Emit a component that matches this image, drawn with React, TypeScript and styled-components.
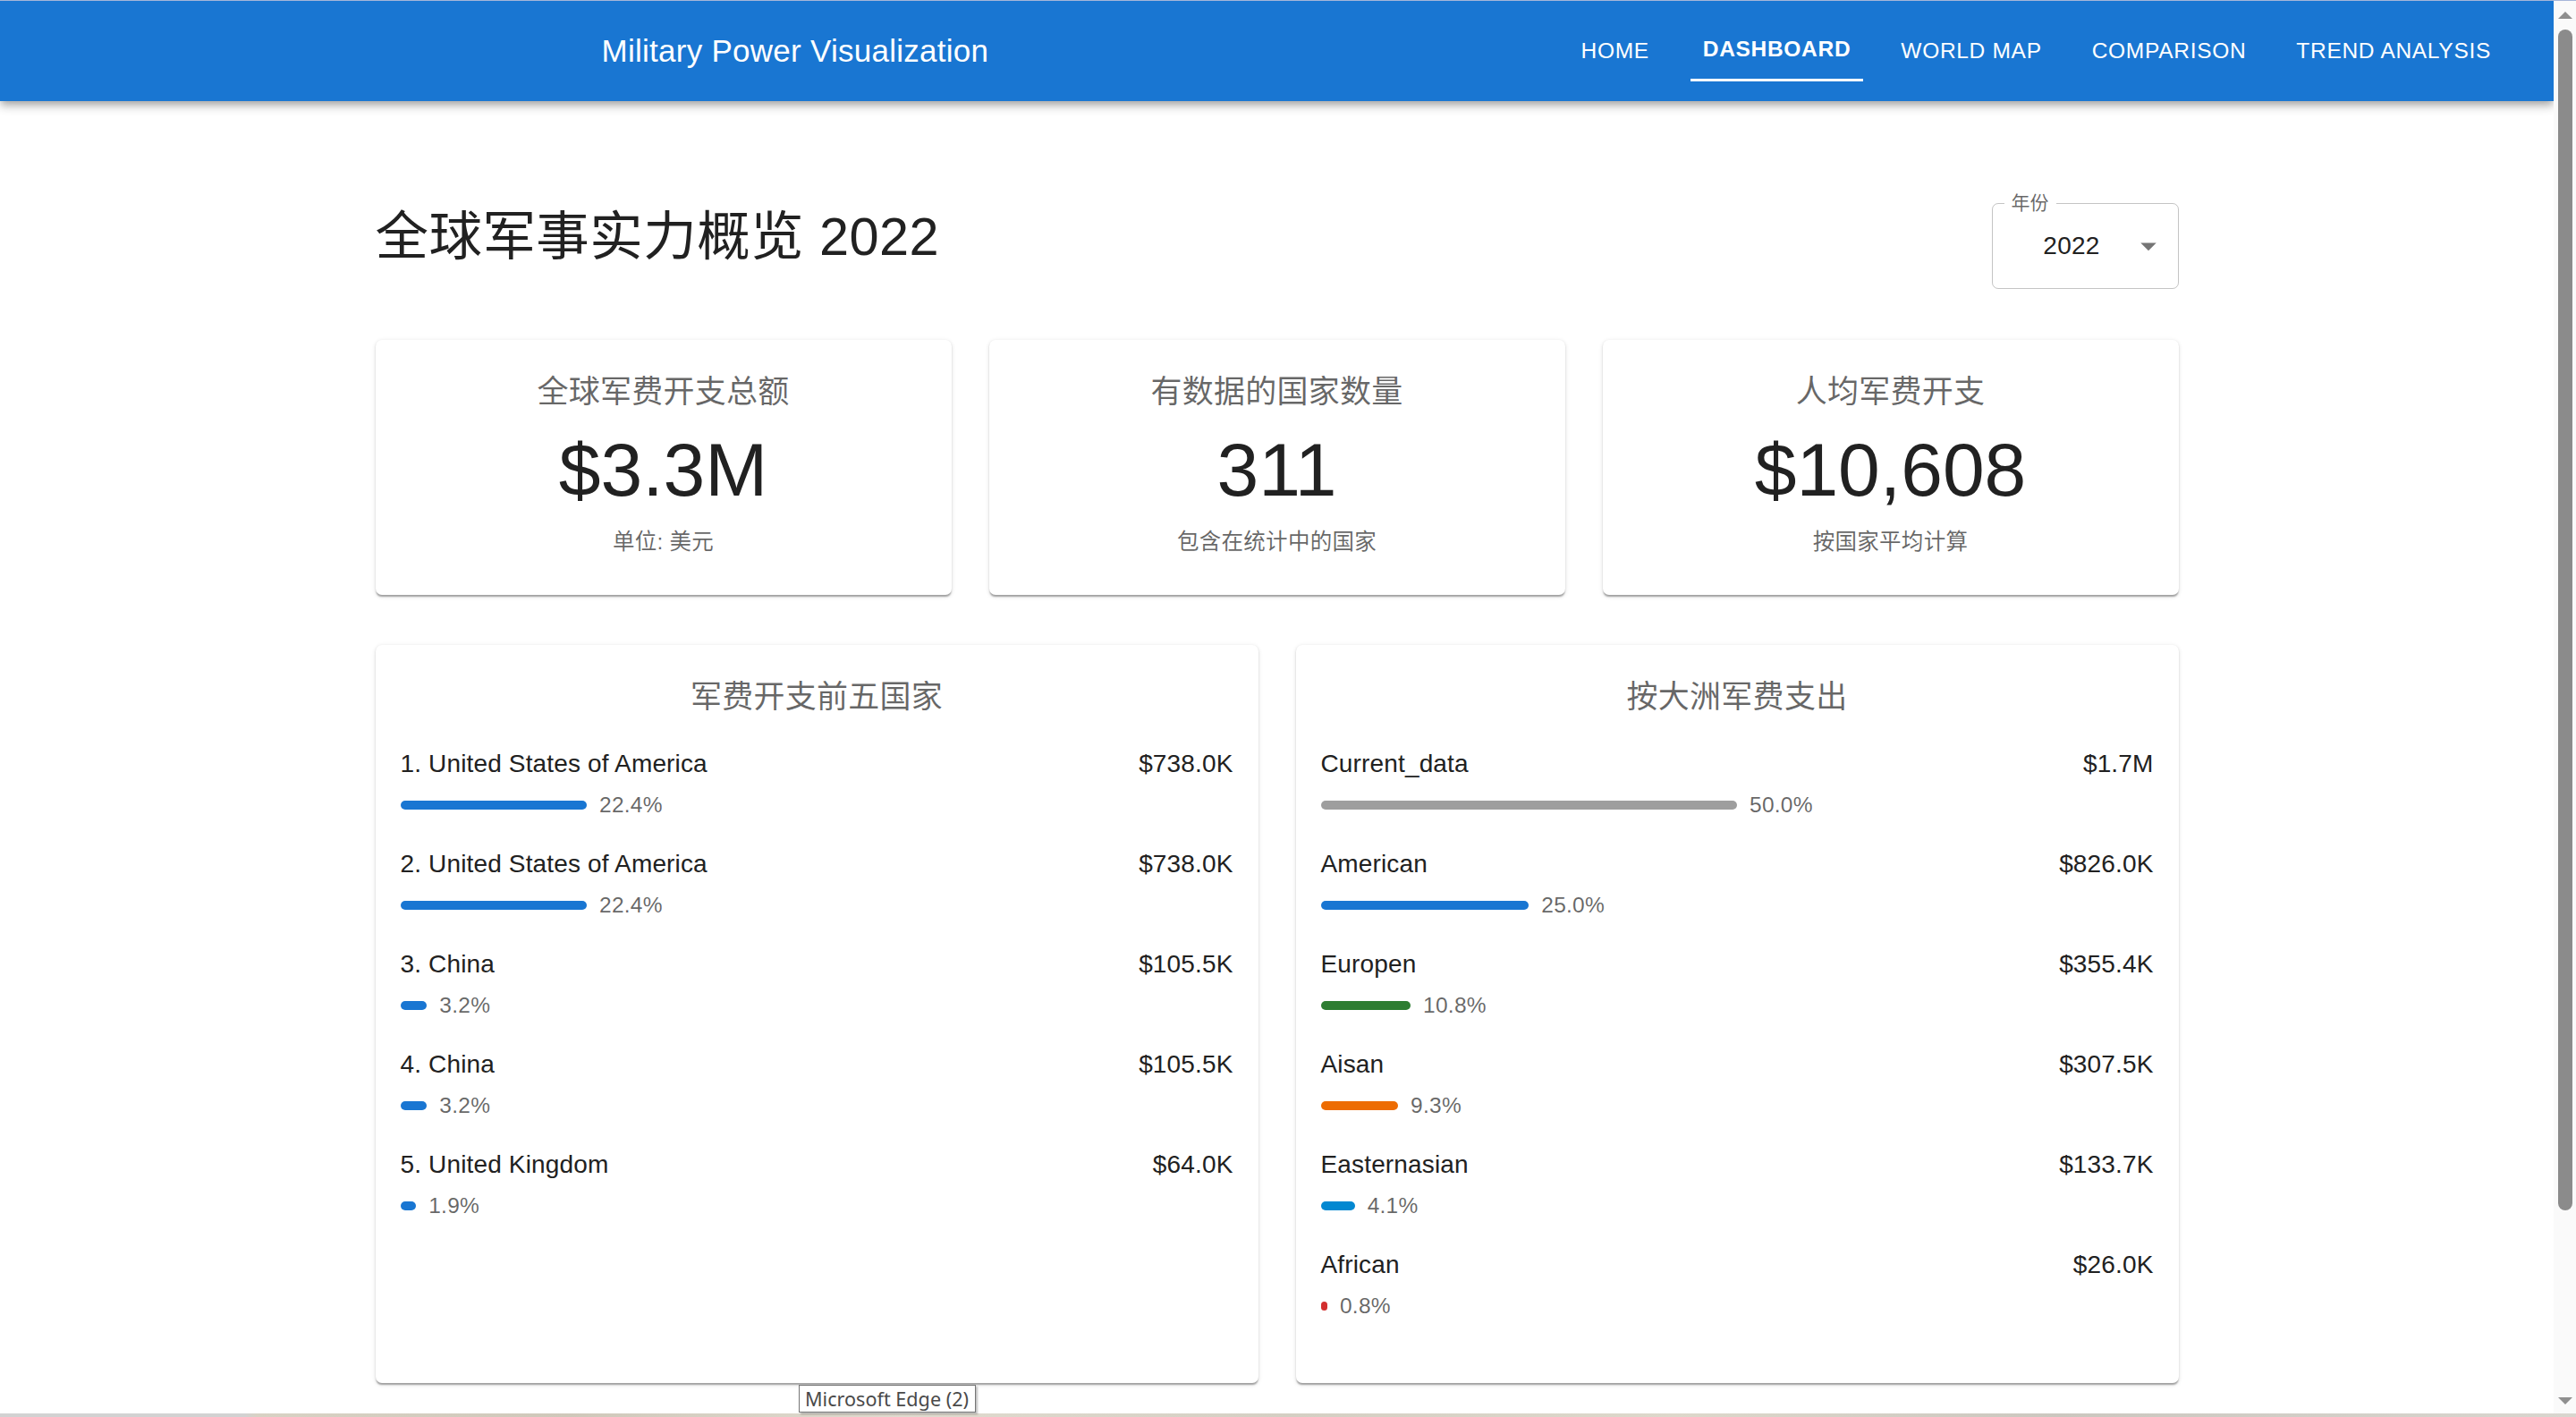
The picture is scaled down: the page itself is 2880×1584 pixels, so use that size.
import React from 'react';
import styled, { createGlobalStyle } from 'styled-components';

const FONT = `"Liberation Sans", Arial, "Noto Sans CJK SC", sans-serif`;

const GlobalStyle = createGlobalStyle`
  html, body { margin: 0; padding: 0; background: #fff; overflow: hidden; }
  #root { width: 2880px; height: 1584px; }
  *, *::before, *::after { box-sizing: border-box; }
`;

const Screen = styled.div`
  position: relative;
  width: 2880px;
  height: 1584px;
  display: flex;
  flex-direction: column;
  overflow: hidden;
  font-family: ${FONT};
  background: #fff;
`;

const WindowEdge = styled.div`
  height: 1px;
  flex-shrink: 0;
  background: #a6b6d9;
`;

const Viewport = styled.div`
  flex: 1;
  min-height: 0;
  display: flex;
`;

const Page = styled.div`
  flex: 1;
  min-width: 0;
  display: flex;
  flex-direction: column;
  overflow: hidden;
  background: #fff;
`;

const AppBar = styled.header`
  position: relative;
  z-index: 2;
  height: 112px;
  flex-shrink: 0;
  display: flex;
  align-items: stretch;
  padding: 0 56px 0 42px;
  background: #1976d2;
  color: #fff;
  box-shadow: 0 3.5px 7px -1.75px rgba(0, 0, 0, 0.2), 0 7px 8.75px 0 rgba(0, 0, 0, 0.14),
    0 1.75px 17.5px 0 rgba(0, 0, 0, 0.12);
`;

const Brand = styled.h1`
  flex: 1;
  align-self: center;
  margin: 0 14px 0 0;
  text-align: center;
  font-size: 35px;
  font-weight: 400;
  line-height: 56px;
  letter-spacing: 0.26px;
  color: #fff;
`;

const Nav = styled.nav`
  display: flex;
  align-items: stretch;
  gap: 28px;
`;

const NavButton = styled.a<{ $active?: boolean }>`
  position: relative;
  display: flex;
  align-items: center;
  justify-content: center;
  min-width: 112px;
  padding: 0 14px ${(p) => (p.$active ? 5 : 0)}px;
  font-size: 24.5px;
  font-weight: ${(p) => (p.$active ? 700 : 400)};
  letter-spacing: 0.7px;
  text-transform: uppercase;
  color: #fff;
  text-decoration: none;
  white-space: nowrap;
  cursor: pointer;
`;

const NavIndicator = styled.span`
  position: absolute;
  left: 0;
  right: 0;
  bottom: 22px;
  height: 3px;
  background: #fff;
`;

const Main = styled.main`
  flex: 1;
  padding-top: 102px;
`;

const Container = styled.div`
  width: 100%;
  max-width: 2100px;
  margin: 0 auto;
  padding: 0 42px;
`;

const HeadingRow = styled.div`
  display: flex;
  justify-content: space-between;
  align-items: flex-start;
  margin-bottom: 57px;
`;

const PageTitle = styled.h2`
  margin: 13px 0 0;
  font-size: 59.5px;
  line-height: 73.5px;
  font-weight: 400;
  letter-spacing: 0.44px;
  color: #212121;
`;

const SelectBox = styled.fieldset`
  margin: 0;
  padding: 0;
  width: 209px;
  min-width: 0;
  border: 1px solid rgba(0, 0, 0, 0.23);
  border-radius: 7px;
`;

const SelectLabel = styled.legend`
  margin-left: 13px;
  padding: 0 8px;
  font-size: 21px;
  line-height: 24px;
  color: rgba(0, 0, 0, 0.6);
`;

const SelectValueRow = styled.div`
  height: 83px;
  display: flex;
  align-items: center;
  padding-bottom: 12px;
`;

const SelectValue = styled.span`
  flex: 1;
  padding-left: 24px;
  text-align: center;
  font-size: 28px;
  line-height: 1;
  color: #212121;
  letter-spacing: 0.26px;
`;

const DropIcon = styled.svg`
  width: 42px;
  height: 42px;
  margin-right: 12px;
  flex-shrink: 0;
  fill: rgba(0, 0, 0, 0.54);
`;

const StatsGrid = styled.div`
  display: grid;
  grid-template-columns: repeat(3, 1fr);
  gap: 42px;
  margin-bottom: 56px;
`;

const PanelsGrid = styled.div`
  display: grid;
  grid-template-columns: repeat(2, 1fr);
  gap: 42px;
`;

const Card = styled.section`
  background: #fff;
  border-radius: 7px;
  box-shadow: 0 3.5px 1.75px -1.75px rgba(0, 0, 0, 0.2), 0 1.75px 1.75px 0 rgba(0, 0, 0, 0.14),
    0 1.75px 5.25px 0 rgba(0, 0, 0, 0.12);
  padding: 28px 28px 42px;
`;

const StatCard = styled(Card)`
  text-align: center;
`;

const CardTitle = styled.h3<{ $gap: number }>`
  margin: 0 0 ${(p) => p.$gap}px;
  padding-top: 2px;
  font-size: 35px;
  line-height: 56px;
  font-weight: 400;
  letter-spacing: 0.26px;
  color: rgba(0, 0, 0, 0.6);
  text-align: center;
`;

const StatValue = styled.div`
  font-size: 84px;
  line-height: 98px;
  font-weight: 400;
  color: #212121;
`;

const StatNote = styled.p`
  margin: 14px 0 0;
  font-size: 24.5px;
  line-height: 35px;
  letter-spacing: 0.26px;
  color: rgba(0, 0, 0, 0.6);
`;

const ItemList = styled.ul`
  list-style: none;
  margin: 0;
  padding: 0;
`;

const Item = styled.li`
  margin-bottom: 27px;
`;

const ItemHead = styled.div`
  display: flex;
  justify-content: space-between;
  padding-top: 1px;
  font-size: 28px;
  line-height: 42px;
  letter-spacing: 0.15px;
  color: #212121;
`;

const BarRow = styled.div`
  display: flex;
  align-items: center;
  height: 35px;
  margin-top: 7px;
`;

const Bar = styled.div<{ $color: string }>`
  flex-shrink: 0;
  height: 10px;
  border-radius: 5px;
  background: ${(p) => p.$color};
`;

const Percent = styled.span`
  margin-left: 14px;
  font-size: 24.5px;
  line-height: 35px;
  letter-spacing: 0.26px;
  color: rgba(0, 0, 0, 0.6);
`;

const ScrollTrack = styled.div`
  width: 25px;
  flex-shrink: 0;
  display: flex;
  flex-direction: column;
  align-items: center;
  padding: 12px 0 10px;
  background: #fafafa;
`;

const ScrollArrow = styled.svg`
  display: block;
  width: 16px;
  height: 8px;
  flex-shrink: 0;
  fill: #8f8f8f;
`;

const ScrollThumb = styled.div`
  width: 16px;
  height: 1320px;
  margin-top: 12px;
  border-radius: 8px;
  background: #8b8b8b;
`;

const ScrollSpacer = styled.div`
  flex: 1;
`;

const Taskbar = styled.div`
  height: 4px;
  flex-shrink: 0;
  background: linear-gradient(
    90deg,
    #d2d2d2 0,
    #d2d2d2 9.5%,
    #d8d2c4 10%,
    #cfc8ba 22%,
    #e0dbcf 35%,
    #d4cfc3 50%,
    #ddd8cb 65%,
    #cbc7bf 80%,
    #d9d6cf 100%
  );
`;

const Tooltip = styled.div`
  position: absolute;
  left: 893px;
  top: 1548px;
  height: 31px;
  padding: 0 7px 0 6px;
  border: 1px solid #767676;
  background: #fff;
  box-shadow: 2px 2px 2px rgba(0, 0, 0, 0.25);
  font-family: "Noto Sans", "Open Sans", sans-serif;
  font-size: 21.6px;
  line-height: 29px;
  color: #4a4a4a;
  white-space: nowrap;
`;

type Entry = { name: string; value: string; pct: number; color: string };

const BLUE = '#1976d2';

const topCountries: Entry[] = [
  { name: '1. United States of America', value: '$738.0K', pct: 22.4, color: BLUE },
  { name: '2. United States of America', value: '$738.0K', pct: 22.4, color: BLUE },
  { name: '3. China', value: '$105.5K', pct: 3.2, color: BLUE },
  { name: '4. China', value: '$105.5K', pct: 3.2, color: BLUE },
  { name: '5. United Kingdom', value: '$64.0K', pct: 1.9, color: BLUE },
];

const continents: Entry[] = [
  { name: 'Current_data', value: '$1.7M', pct: 50.0, color: '#9e9e9e' },
  { name: 'American', value: '$826.0K', pct: 25.0, color: BLUE },
  { name: 'Europen', value: '$355.4K', pct: 10.8, color: '#2e7d32' },
  { name: 'Aisan', value: '$307.5K', pct: 9.3, color: '#ed6c02' },
  { name: 'Easternasian', value: '$133.7K', pct: 4.1, color: '#0288d1' },
  { name: 'African', value: '$26.0K', pct: 0.8, color: '#d32f2f' },
];

const stats = [
  { title: '全球军费开支总额', value: '$3.3M', note: '单位: 美元' },
  { title: '有数据的国家数量', value: '311', note: '包含在统计中的国家' },
  { title: '人均军费开支', value: '$10,608', note: '按国家平均计算' },
];

const navItems = ['Home', 'Dashboard', 'World Map', 'Comparison', 'Trend Analysis'];

const EntryList: React.FC<{ entries: Entry[] }> = ({ entries }) => (
  <ItemList>
    {entries.map((e, i) => (
      <Item key={i}>
        <ItemHead>
          <span>{e.name}</span>
          <span>{e.value}</span>
        </ItemHead>
        <BarRow>
          <Bar $color={e.color} style={{ width: `${e.pct}%` }} />
          <Percent>{e.pct.toFixed(1)}%</Percent>
        </BarRow>
      </Item>
    ))}
  </ItemList>
);

export default function App() {
  return (
    <>
      <GlobalStyle />
      <Screen>
        <WindowEdge />
        <Viewport>
          <Page>
            <AppBar>
              <Brand>Military Power Visualization</Brand>
              <Nav>
                {navItems.map((label) => {
                  const active = label === 'Dashboard';
                  return (
                    <NavButton key={label} $active={active}>
                      {label}
                      {active && <NavIndicator />}
                    </NavButton>
                  );
                })}
              </Nav>
            </AppBar>
            <Main>
              <Container>
                <HeadingRow>
                  <PageTitle>全球军事实力概览 2022</PageTitle>
                  <SelectBox>
                    <SelectLabel>年份</SelectLabel>
                    <SelectValueRow>
                      <SelectValue>2022</SelectValue>
                      <DropIcon viewBox="0 0 24 24">
                        <path d="M7 10l5 5 5-5z" />
                      </DropIcon>
                    </SelectValueRow>
                  </SelectBox>
                </HeadingRow>
                <StatsGrid>
                  {stats.map((s) => (
                    <StatCard key={s.title}>
                      <CardTitle $gap={10}>{s.title}</CardTitle>
                      <StatValue>{s.value}</StatValue>
                      <StatNote>{s.note}</StatNote>
                    </StatCard>
                  ))}
                </StatsGrid>
                <PanelsGrid>
                  <Card>
                    <CardTitle $gap={25}>军费开支前五国家</CardTitle>
                    <EntryList entries={topCountries} />
                  </Card>
                  <Card>
                    <CardTitle $gap={25}>按大洲军费支出</CardTitle>
                    <EntryList entries={continents} />
                  </Card>
                </PanelsGrid>
              </Container>
            </Main>
          </Page>
          <ScrollTrack>
            <ScrollArrow viewBox="0 0 16 8">
              <path d="M8 0L16 8H0z" />
            </ScrollArrow>
            <ScrollThumb />
            <ScrollSpacer />
            <ScrollArrow viewBox="0 0 16 8">
              <path d="M0 0H16L8 8z" />
            </ScrollArrow>
          </ScrollTrack>
        </Viewport>
        <Taskbar />
        <Tooltip>Microsoft Edge (2)</Tooltip>
      </Screen>
    </>
  );
}
